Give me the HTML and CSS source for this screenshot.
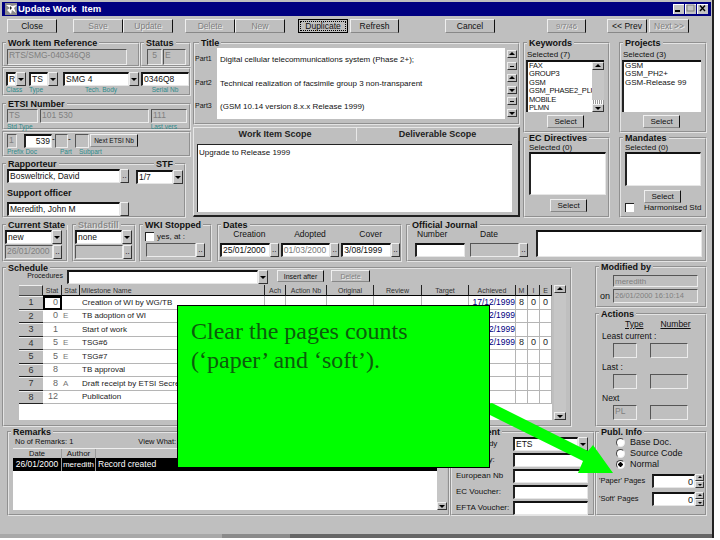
FILE: index.html
```html
<!DOCTYPE html>
<html lang="en">
<head>
<meta charset="utf-8">
<title>Update Work Item</title>
<link rel="stylesheet" href="styles.css">
</head>
<body>
<div class="window">
  <header class="titlebar">
    <svg class="appicon" viewBox="0 0 12 12" width="12" height="12"><rect width="12" height="12" fill="#8c8c8c"/><path d="M1 2l4 3-3 2 4 4 1-4 4 3-2-5 3-3-5 1-2-1z" fill="#fff"/><path d="M5 3l2 2-2 2z" fill="#222"/></svg>
    <span class="titletext">Update Work&nbsp; Item</span>
    <span class="winbtns">
      <span class="winbtn"><svg viewBox="0 0 11 9" width="11" height="9"><rect x="2" y="6" width="5" height="2" fill="#000"/></svg></span>
      <span class="winbtn"><svg viewBox="0 0 11 9" width="11" height="9"><rect x="2" y="1" width="7" height="6" fill="none" stroke="#808080"/></svg></span>
      <span class="winbtn"><svg viewBox="0 0 11 9" width="11" height="9"><path d="M3 1.5l5 5.5M8 1.5l-5 5.5" stroke="#000" stroke-width="1.4"/></svg></span>
    </span>
  </header>

  <nav class="toolbar">
    <button class="btn">Close</button>
    <span class="tgroup g1"><button class="btn off">Save</button><button class="btn off">Update</button></span>
    <span class="tgroup g2"><button class="btn off">Delete</button><button class="btn off">New</button></span>
    <span class="tgroup g3"><button class="btn focus"><span>Duplicate</span></button><button class="btn refresh">Refresh</button></span>
    <span class="tgroup g4"><button class="btn">Cancel</button></span>
    <span class="tgroup g5"><button class="btn off date">9/7/46</button></span>
    <span class="tgroup g6"><button class="btn nav">&lt;&lt; Prev</button><button class="btn nav off">Next &gt;&gt;</button></span>
  </nav>

  <section class="row-a">
    <div class="col-left">
      <div class="pair">
        <fieldset class="fs ref"><legend>Work Item Reference</legend>
          <div class="in dis ref-in">RTS/SMG-040346Q8</div>
        </fieldset>
        <fieldset class="fs status"><legend>Status</legend>
          <div class="status-row"><div class="in dis st1">5</div><div class="in dis st2">E</div></div>
        </fieldset>
      </div>
      <div class="box classrow">
        <div class="ctl cl-r"><div class="combo"><span class="in val">R</span><i class="dd"></i></div><small>Class</small></div>
        <div class="ctl cl-t"><div class="combo"><span class="in val">TS</span><i class="dd"></i></div><small>Type</small></div>
        <div class="ctl cl-b"><div class="combo"><span class="in val">SMG 4</span><i class="dd"></i></div><small class="mid">Tech. Body</small></div>
        <div class="ctl cl-s"><div class="in">0346Q8</div><small class="mid">Serial Nb</small></div>
      </div>
      <fieldset class="fs etsi"><legend>ETSI Number</legend>
        <div class="etsi-row">
          <div class="in dis e1">TS</div><div class="in dis e2">101 530</div><div class="in dis e3">111</div>
        </div>
        <div class="etsi-labels"><small>Std Type</small><small>Last vers</small></div>
      </fieldset>
      <div class="box docrow">
        <div class="doc-fields">
          <div class="in dis d1">1</div><div class="in d2">539</div><span class="dash">-</span><div class="in dis d3"></div><span class="dash">-</span><div class="in dis d4"></div><button class="btn tiny">Next ETSI Nb</button>
        </div>
        <div class="doc-labels"><small>Prefix Doc</small><small>Part</small><small>Subpart</small></div>
      </div>
      <div class="rap">
        <fieldset class="fs rap1"><legend>Rapporteur</legend>
          <div class="picker"><div class="in val">Bosweltrick, David</div><button class="mini">..</button></div>
          <div class="subhead">Support officer</div>
          <div class="picker"><div class="in val">Meredith, John M</div><button class="mini"></button></div>
        </fieldset>
        <fieldset class="fs rap2"><legend>STF</legend>
          <div class="combo stf"><span class="in val">1/7</span><i class="dd"></i></div>
        </fieldset>
      </div>
    </div>

    <div class="col-mid">
      <fieldset class="fs title"><legend>Title</legend>
        <div class="title-grid">
          <label>Part1</label><div class="tline">Digital cellular telecommunications system (Phase 2+);</div><div class="spin"><i class="sb up"></i><i class="sb flat"></i></div>
          <label>Part2</label><div class="tline">Technical realization of facsimile group 3 non-transparent</div><div class="spin"><i class="sb up"></i><i class="sb down"></i></div>
          <label>Part3</label><div class="tline">(GSM 10.14 version 8.x.x Release 1999)</div><div class="spin"><i class="sb flat"></i><i class="sb down"></i></div>
        </div>
      </fieldset>
      <div class="tabs">
        <div class="tabhead"><span class="tab">Work Item Scope</span><span class="tab">Deliverable Scope</span></div>
        <div class="tabbody"><div class="scope">Upgrade to Release 1999</div></div>
      </div>
    </div>

    <div class="col-right">
      <fieldset class="fs kw"><legend>Keywords</legend>
        <div class="sel-label">Selected (7)</div>
        <div class="list">
          <div class="items"><span>FAX</span><span>GROUP3</span><span>GSM</span><span>GSM_PHASE2_PLU</span><span>MOBILE</span><span>PLMN</span></div>
          <div class="vscroll"><i class="sb up"></i><i class="track"></i><i class="thumb"></i><i class="sb down"></i></div>
        </div>
        <button class="btn sel kw-sel">Select</button>
      </fieldset>
      <fieldset class="fs pj"><legend>Projects</legend>
        <div class="sel-label">Selected (3)</div>
        <div class="list pj-list"><div class="items"><span>GSM</span><span>GSM_PH2+</span><span>GSM-Release 99</span></div></div>
        <button class="btn sel pj-sel">Select</button>
      </fieldset>
      <fieldset class="fs ec"><legend>EC Directives</legend>
        <div class="sel-label tight">Selected (0)</div>
        <div class="in ec-box"></div>
        <button class="btn sel ec-sel">Select</button>
      </fieldset>
      <fieldset class="fs md"><legend>Mandates</legend>
        <div class="sel-label tight">Selected (0)</div>
        <div class="in md-box"></div>
        <button class="btn sel md-sel">Select</button>
        <div class="harm"><i class="check"></i><span>Harmonised Std</span></div>
      </fieldset>
    </div>
  </section>

  <section class="row-b">
    <fieldset class="fs cs"><legend>Current State</legend>
      <div class="combo"><span class="in val">new</span><i class="dd"></i></div>
      <div class="picker date2"><div class="in dis val">26/01/2000</div><button class="mini">..</button></div>
    </fieldset>
    <fieldset class="fs ss"><legend class="gray">Standstill</legend>
      <div class="combo"><span class="in val">none</span><i class="dd"></i></div>
      <div class="picker date2"><div class="in dis val"></div><button class="mini">..</button></div>
    </fieldset>
    <fieldset class="fs wk"><legend>WKI Stopped</legend>
      <div class="yes"><i class="check"></i><span>yes, at :</span></div>
      <div class="picker wk-p"><div class="in dis val"></div><button class="mini">..</button></div>
    </fieldset>
    <fieldset class="fs dt"><legend>Dates</legend>
      <div class="dates">
        <div class="dcol"><span>Creation</span><div class="picker"><div class="in val">25/01/2000</div><button class="mini">..</button></div></div>
        <div class="dcol"><span>Adopted</span><div class="picker"><div class="in val faded">01/03/2000</div><button class="mini">..</button></div></div>
        <div class="dcol"><span>Cover</span><div class="picker"><div class="in val">3/08/1999</div><button class="mini">..</button></div></div>
      </div>
    </fieldset>
    <fieldset class="fs oj"><legend>Official Journal</legend>
      <div class="oj-row">
        <div class="ojcol oj-num"><span>Number</span><div class="in"></div></div>
        <div class="ojcol oj-date"><span>Date</span><div class="picker"><div class="in dis val"></div><button class="mini">..</button></div></div>
        <div class="in oj-text"></div>
      </div>
    </fieldset>
  </section>

  <section class="row-c">
    <fieldset class="fs sched"><legend>Schedule</legend>
      <div class="sched-top">
        <span class="proc">Procedures</span>
        <div class="combo proc-c"><span class="in val"></span><i class="dd"></i></div>
        <button class="btn ins">Insert after</button>
        <button class="btn off del">Delete</button>
      </div>
      <div class="sched-main">
        <div class="gridwrap">
          <table class="grid">
            <colgroup><col class="c1"><col class="c2"><col class="c3"><col class="c4"><col class="c5"><col class="c6"><col class="c7"><col class="c8"><col class="c9"><col class="c10"><col class="c11"><col class="c12"><col class="c13"></colgroup>
            <thead><tr><th></th><th>Stat</th><th>Stat</th><th class="l">Milestone Name</th><th>Ach</th><th>Action Nb</th><th>Original</th><th>Review</th><th>Target</th><th>Achieved</th><th>M</th><th>I</th><th>E</th></tr></thead>
            <tbody>
              <tr><th>1</th><td class="cur">0</td><td></td><td class="l">Creation of WI by WG/TB</td><td></td><td></td><td></td><td></td><td></td><td class="ach">17/12/1999</td><td>8</td><td>0</td><td>0</td></tr>
              <tr><th>2</th><td class="n">0</td><td class="g">E</td><td class="l">TB adoption of WI</td><td></td><td></td><td></td><td></td><td></td><td class="ach">17/12/1999</td><td></td><td></td><td></td></tr>
              <tr><th>3</th><td class="n">1</td><td></td><td class="l">Start of work</td><td></td><td></td><td></td><td></td><td></td><td class="ach">17/12/1999</td><td></td><td></td><td></td></tr>
              <tr><th>4</th><td class="n">5</td><td class="g">E</td><td class="l">TSG#6</td><td></td><td></td><td></td><td></td><td></td><td class="ach">17/12/1999</td><td>8</td><td>0</td><td>0</td></tr>
              <tr><th>5</th><td class="n">5</td><td class="g">E</td><td class="l">TSG#7</td><td></td><td></td><td></td><td></td><td></td><td></td><td></td><td></td><td></td></tr>
              <tr><th>6</th><td class="n">8</td><td></td><td class="l">TB approval</td><td></td><td></td><td></td><td></td><td></td><td></td><td></td><td></td><td></td></tr>
              <tr><th>7</th><td class="n">8</td><td class="g">A</td><td class="l">Draft receipt by ETSI Secretariat</td><td></td><td></td><td></td><td></td><td></td><td></td><td></td><td></td><td></td></tr>
              <tr><th>8</th><td class="n">12</td><td></td><td class="l">Publication</td><td></td><td></td><td></td><td></td><td></td><td></td><td></td><td></td><td></td></tr>
            </tbody>
          </table>
        </div>
        <div class="vscroll tall"><i class="sb up"></i><i class="track"></i><i class="sb down"></i></div>
      </div>
    </fieldset>
    <div class="col-mod">
      <fieldset class="fs mod"><legend>Modified by</legend>
        <div class="in dis mod1">meredith</div>
        <div class="mod-on"><span>on</span><div class="in dis mod2">26/01/2000 16:10:14</div></div>
      </fieldset>
      <fieldset class="fs act"><legend>Actions</legend>
        <div class="act-head"><u>Type</u><u>Number</u></div>
        <div class="act-l">Least current :</div>
        <div class="act-f"><div class="in dis a1"></div><div class="in dis a2"></div></div>
        <div class="act-l">Last :</div>
        <div class="act-f"><div class="in dis a1"></div><div class="in dis a2"></div></div>
        <div class="act-l">Next</div>
        <div class="act-f"><div class="in dis a1">PL</div><div class="in dis a2"></div></div>
      </fieldset>
    </div>
  </section>

  <section class="row-d">
    <fieldset class="fs rem"><legend>Remarks</legend>
      <div class="rem-info"><span>No of Remarks: 1</span><span class="view">View What:</span></div>
      <div class="rem-main">
        <div class="rem-grid">
          <div class="rem-head"><span class="r1">Date</span><span class="r2">Author</span><span class="r3"></span></div>
          <div class="rem-row"><span class="r1">26/01/2000</span><span class="r2">meredith</span><span class="r3">Record created</span></div>
        </div>
        <div class="vscroll rem-sb"><i class="track"></i><i class="sb down"></i></div>
      </div>
    </fieldset>
    <fieldset class="fs doc"><legend>Document</legend>
      <div class="doc-line"><span>Resp. Body</span><div class="combo"><span class="in val">ETS</span><i class="dd"></i></div></div>
      <div class="doc-line"><span>Sec. Body:</span><div class="in"></div></div>
      <div class="doc-line"><span>European Nb</span><div class="in"></div></div>
      <div class="doc-line"><span>EC Voucher:</span><div class="in"></div></div>
      <div class="doc-line"><span>EFTA Voucher:</span><div class="in"></div></div>
    </fieldset>
    <fieldset class="fs pub"><legend>Publ. Info</legend>
      <div class="radio"><i class="dot"></i><span>Base Doc.</span></div>
      <div class="radio"><i class="dot"></i><span>Source Code</span></div>
      <div class="radio"><i class="dot on"></i><span>Normal</span></div>
      <div class="pages first"><span>'Paper' Pages</span><div class="in num">0</div><div class="updn"><i class="sb up"></i><i class="sb down"></i></div></div>
      <div class="pages"><span>'Soft' Pages</span><div class="in num">0</div><div class="updn"><i class="sb up"></i><i class="sb down"></i></div></div>
    </fieldset>
  </section>

  <footer class="strip"><span class="s1"></span><span class="s2"></span><span class="s3"></span></footer>

  <svg class="arrow" viewBox="0 0 720 540" width="720" height="540"><path d="M486 404L492 403L588 451L593 445L613 473L578 473L583 461L486 413Z" fill="#00ff00"/></svg>
  <aside class="callout">Clear the pages counts<br>(&lsquo;paper&rsquo; and &lsquo;soft&rsquo;).</aside>
</div>
</body>
</html>
```

FILE: styles.css
```css
* { box-sizing: border-box; }
html, body { margin: 0; padding: 0; background: #fff; }
body { font: 8.5px/11px "Liberation Sans", Arial, sans-serif; color: #111; }
i { display: block; font-style: normal; }
small { display: block; font-size: 6.5px; line-height: 8px; color: #2e8b8b; white-space: nowrap; }
.window { position: relative; width: 714px; height: 538px; background: #bfbfbf; border-right: 2px solid #222; display: flex; flex-direction: column; overflow: hidden; padding-left: 2px; }

.titlebar { height: 14px; margin-top: 2px; width: 709px; background: #000080; display: flex; align-items: center; color: #fff; font: bold 9.5px/14px "Liberation Sans", sans-serif; padding-left: 3px; flex: none; }
.appicon { margin-right: 1px; }
.winbtns { margin-left: auto; margin-right: 3px; display: flex; gap: 1px; }
.winbtn { width: 11px; height: 10px; background: #c4c4c4; border-top: 1px solid #fff; border-left: 1px solid #fff; display: block; line-height: 0; }
.winbtn svg { display: block; margin: -1px 0 0 -1px; }

.btn { font: 8.5px/11px "Liberation Sans", sans-serif; color: #111; background: #bfbfbf; border: 1px solid; border-color: #efefef #111 #888 #efefef; padding: 0; margin: 0; display: block; }
.btn.off { color: #7f7f7f; text-shadow: 1px 1px 0 #eee; }
.toolbar { display: flex; height: 14px; margin-top: 3px; padding-left: 5px; flex: none; }
.toolbar .btn { width: 50px; height: 14px; }
.tgroup { display: flex; }
.g1 { margin-left: 16px; }
.g2 { margin-left: 12px; }
.g3 { margin-left: 13px; }
.g4 { margin-left: 46px; }
.g5 { margin-left: 52px; }
.g6 { margin-left: 21px; }
.toolbar .refresh { width: 49px; margin-left: 2px; }
.toolbar .date { width: 39px; font-size: 7.5px; }
.toolbar .nav { width: 40px; margin-right: 2px; }
.btn.focus { border: 1px solid #000; padding: 1px; }
.btn.focus span { display: block; border: 1px dotted #000; line-height: 8px; height: 10px; }

.fs { --pad: 0px; margin: 0; padding: 0 0 0 var(--pad); min-width: 0; border: 2px groove #e4e4e4; }
legend { font: bold 9px/10px "Liberation Sans", sans-serif; height: 10px; padding: 0 2px; margin-left: calc(2px - var(--pad)); white-space: nowrap; }
legend.gray { color: #8a8a8a; text-shadow: 1px 1px 0 #e8e8e8; }
.box { border: 2px groove #e4e4e4; }

.in { display: block; background: #fff; border-top: 2px solid #111; border-left: 2px solid #222; border-right: 1px solid #e6e6e6; border-bottom: 1px solid #e6e6e6; font-size: 8.5px; line-height: 10px; padding: 0 1px; white-space: nowrap; overflow: hidden; height: 14px; }
.in.dis { background: #bfbfbf; color: #808080; border-top: 1px solid #555; border-left: 1px solid #555; border-right: 1px solid #ececec; border-bottom: 1px solid #ececec; line-height: 11px; }
.faded { color: #777; }
.combo, .picker { display: flex; height: 14px; }
.combo .val, .picker .val { flex: 1; min-width: 0; height: 100%; }
.dd { width: 10px; flex: none; background: #bfbfbf; border: 1px solid; border-color: #eee #333 #333 #eee; position: relative; }
.dd::after, .sb.down::after { content: ""; position: absolute; left: 50%; top: 50%; margin: -1px 0 0 -3px; border: 3px solid transparent; border-top: 3px solid #000; border-bottom: 0; }
.mini { width: 9px; flex: none; background: #bfbfbf; border: 1px solid; border-color: #eee #333 #333 #eee; padding: 0; font: 8px/8px "Liberation Sans", sans-serif; margin: 0; }

.row-a { display: flex; margin-top: 5px; height: 180px; flex: none; }
.col-left { width: 189px; display: flex; flex-direction: column; }
.pair { display: flex; height: 29px; }
.ref { width: 138px; --pad: 3px; padding-top: 1px; }
.ref-in { width: 120px; height: 16px; }
.status { width: 51px; --pad: 5px; padding-top: 1px; }
.status-row { display: flex; gap: 1px; }
.st1 { width: 15px; height: 16px; text-align: center; }
.st2 { width: 23px; height: 16px; }
.classrow { height: 29px; display: flex; padding: 3px 0 0 2px; }
.ctl { flex: none; }
.cl-r { width: 20px; margin-right: 3px; }
.cl-t { width: 29px; margin-right: 5px; }
.cl-b { width: 76px; margin-right: 2px; }
.cl-s { width: 48px; }
.mid { text-align: center; }
.etsi { height: 31px; margin-top: 3px; --pad: 3px; }
.etsi-row { display: flex; gap: 2px; }
.e1 { width: 31px; }
.e2 { width: 109px; }
.e3 { width: 36px; }
.etsi-labels { display: flex; justify-content: space-between; padding-right: 12px; }
.docrow { height: 26px; margin-top: 1px; padding: 1px 0 0 3px; }
.doc-fields { display: flex; align-items: flex-start; }
.doc-fields .in { height: 14px; }
.d1 { width: 10px; }
.d2 { width: 28px; margin-left: 7px; text-align: right; }
.dash { width: 3px; text-align: center; }
.d3 { width: 13px; }
.d4 { width: 14px; margin-left: 4px; }
.tiny { width: 48px; height: 13px; font-size: 6.5px; line-height: 9px; margin-left: 1px; }
.doc-labels { display: flex; }
.doc-labels small:nth-child(1) { width: 53px; }
.doc-labels small:nth-child(2) { width: 19px; }
.rap { display: flex; height: 59px; margin-top: 2px; width: 184px; }
.rap1 { width: 131px; border-right: 0; --pad: 3px; }
.rap1 .picker { width: 122px; }
.rap1 .mini { width: 9px; }
.subhead { font: bold 9px/12px "Liberation Sans", sans-serif; margin: 4px 0 3px; }
.rap2 { width: 53px; border-left: 0; --pad: 3px; }
.rap2 legend { margin-left: 18px; }
.stf { width: 47px; margin-top: 1px; }

.col-mid { width: 327px; margin-left: 2px; display: flex; flex-direction: column; }
.title { height: 87px; }
.title legend { margin-left: 4px; }
.title-grid { display: grid; grid-template-columns: 22px 288px 12px; grid-auto-rows: 23.67px; }
.title-grid label { font-size: 7px; line-height: 22px; }
.tline { background: #fff; padding-left: 3px; line-height: 23px; font-size: 8px; white-space: nowrap; overflow: hidden; }
.spin { display: flex; flex-direction: column; gap: 4px; padding: 2px 0 0 2px; }
.sb { width: 10px; height: 8px; background: #bfbfbf; border: 1px solid; border-color: #eee #333 #333 #eee; position: relative; flex: none; }
.sb.up::after { content: ""; position: absolute; left: 50%; top: 50%; margin: -2px 0 0 -3px; border: 3px solid transparent; border-bottom: 3px solid #000; border-top: 0; }
.sb.down::after { margin: -1px 0 0 -3px; }
.sb.flat::after { content: ""; position: absolute; left: 2px; right: 2px; top: 3px; height: 1px; background: #000; }
.tabs { margin-top: 2px; height: 90px; display: flex; flex-direction: column; }
.tabhead { display: flex; height: 14px; flex: none; }
.tab { flex: none; text-align: center; font: bold 9px/13px "Liberation Sans", sans-serif; color: #222; border-top: 1px solid #e8e8e8; border-left: 1px solid #e8e8e8; }
.tab:first-child { width: 163px; }
.tab:last-child { width: 164px; border-right: 2px solid #333; }
.tabbody { flex: 1; border-left: 1px solid #e8e8e8; border-right: 2px solid #222; border-bottom: 2px solid #222; padding: 3px 0 0 3px; }
.scope { width: 315px; height: 68px; background: #fff; border-top: 1px solid #222; border-left: 1px solid #222; padding: 0 1px; font-size: 8px; line-height: 15px; }

.col-right { margin-left: 3px; width: 184px; display: grid; grid-template-columns: 87px 88px; column-gap: 9px; grid-template-rows: 95px 85px; }
.sel-label { font-size: 8px; line-height: 11px; margin: 1px 0 0 1px; }
.sel-label.tight { margin: 0 0 0 4px; line-height: 9px; }
.kw { --pad: 1px; }
.pj { --pad: 1px; }
.list { display: flex; height: 52px; background: #fff; border-top: 2px solid #111; border-left: 2px solid #222; overflow: hidden; }
.kw .list { width: 78px; }
.pj .list { width: 79px; }
.items { flex: 1; min-width: 0; font-size: 7.5px; letter-spacing: -.2px; line-height: 8.4px; padding-left: 1px; }
.pj .items { font-size: 8px; letter-spacing: 0; }
.items span { display: block; white-space: nowrap; }
.vscroll { display: flex; flex-direction: column; width: 12px; flex: none; }
.vscroll .sb { width: 100%; }
.vscroll .track { flex: 1; background: #c6c6c6; }
.vscroll .thumb { height: 4px; background: repeating-linear-gradient(90deg, #fff 0 1px, #999 1px 2px); }
.sel { width: 37px; height: 13px; font-size: 8px; margin-top: 3px; }
.kw-sel, .pj-sel { margin-left: 21px; }
.ec-box { width: 77px; height: 43px; margin-left: 4px; }
.ec-sel { margin: 4px 0 0 25px; }
.md-box { width: 76px; height: 34px; margin-left: 4px; }
.md-sel { margin: 4px 0 0 23px; }
.harm { display: flex; align-items: center; margin-left: 4px; height: 9px; font-size: 8px; }
.harm span { margin-left: 10px; white-space: nowrap; }
.check { width: 9px; height: 9px; background: #fff; border-top: 1px solid #222; border-left: 1px solid #222; flex: none; }

.row-b { display: flex; height: 42px; margin-top: 2px; flex: none; }
.cs { width: 66px; --pad: 1px; }
.cs .combo, .ss .combo { width: 57px; }
.date2 { width: 57px; margin-top: 1px; }
.ss { width: 64px; margin-left: 4px; --pad: 1px; }
.wk { width: 73px; margin-left: 3px; --pad: 4px; }
.yes { display: flex; align-items: center; height: 12px; gap: 3px; font-size: 8px; }
.wk-p { width: 59px; margin: 1px 0 0 1px; }
.dt { width: 185px; margin-left: 5px; --pad: 1px; }
.dates { display: flex; gap: 2px; }
.dcol { width: 59px; }
.dcol span { display: block; height: 13px; text-align: center; font-size: 8.5px; line-height: 9px; }
.dcol .in.val { font-size: 8.5px; }
.oj { width: 301px; margin-left: 4px; --pad: 7px; }
.oj-row { display: flex; align-items: flex-end; }
.ojcol span { display: block; height: 13px; font-size: 8.5px; line-height: 9px; padding-left: 2px; }
.oj-num { width: 50px; }
.oj-date { width: 58px; margin-left: 5px; }
.oj-date span { padding-left: 10px; }
.oj-text { width: 166px; height: 27px; margin-left: 8px; }

.row-c { display: flex; height: 165px; flex: none; margin-top: 0; }
.sched { width: 570px; height: 164px; margin-top: 1px; --pad: 15px; }
.sched-top { display: flex; align-items: flex-start; height: 15px; margin-top: -3px; }
.proc { width: 44px; text-align: right; font-size: 7px; line-height: 12px; white-space: nowrap; }
.proc-c { width: 201px; margin-left: 4px; }
.ins { width: 47px; height: 12px; font-size: 7px; line-height: 9px; margin-left: 9px; }
.del { width: 39px; height: 12px; font-size: 7px; line-height: 9px; margin-left: 7px; }
.sched-main { display: flex; gap: 2px; }
.gridwrap { width: 533px; height: 135px; background: #fff; overflow: hidden; }
.grid { table-layout: fixed; width: 533px; border-collapse: separate; border-spacing: 0; font-size: 8px; }
.c1 { width: 24px; } .c2 { width: 19px; } .c3 { width: 18px; } .c4 { width: 185px; } .c5 { width: 21px; } .c6 { width: 41px; }
.c7 { width: 47px; } .c8 { width: 48px; } .c9 { width: 47px; } .c10 { width: 47px; } .c11 { width: 12px; } .c12 { width: 12px; } .c13 { width: 12px; }
.grid thead th { height: 11px; background: #bfbfbf; font: 7px/9px "Liberation Sans", sans-serif; color: #333; padding: 0; border-right: 1px solid #222; border-bottom: 1px solid #000; overflow: hidden; white-space: nowrap; text-align: center; }
.grid thead th:first-child { background: #aaa; border-top: 1px solid #eee; border-bottom: 1px solid #444; }
.grid thead th.l { text-align: left; padding-left: 1px; }
.grid tbody tr { height: 13.5px; }
.grid tbody th { background: #bfbfbf; font: 9px/11px "Liberation Sans", sans-serif; color: #333; padding: 0; border-top: 1px solid #eee; border-bottom: 1px solid #222; }
.grid td { padding: 0; border-right: 1px solid #b5b5b5; border-bottom: 1px solid #b5b5b5; text-align: center; line-height: 11px; overflow: hidden; white-space: nowrap; color: #222; font-size: 9px; }
.grid td:nth-child(2), .grid td:nth-child(3) { border-right: 0; }
.grid td:nth-child(4) { border-right: 1px solid #b5b5b5; }
.grid td.l { text-align: left; padding-left: 2px; font-size: 8px; }
.grid td.n { text-align: right; padding-right: 4px; color: #666; }
.grid td.g { text-align: left; color: #777; padding-left: 1px; font-size: 8px; }
.grid td.cur { outline: 2px solid #000; outline-offset: -2px; text-align: right; padding-right: 4px; color: #666; }
.grid td.ach { color: #000080; text-align: right; font-size: 8.5px; }
.tall { height: 135px; }

.col-mod { margin-left: 23px; width: 112px; display: flex; flex-direction: column; gap: 1px; }
.mod { height: 46px; }
.mod1 { width: 85px; height: 12px; margin: 3px 0 0 16px; font-size: 8px; line-height: 10px; }
.mod-on { display: flex; margin-top: 2px; }
.mod-on span { width: 16px; padding-left: 3px; line-height: 14px; font-size: 9px; }
.mod2 { width: 85px; height: 14px; font-size: 7.5px; }
.act { height: 119px; --pad: 16px; }
.act-head { display: flex; font-size: 8.5px; height: 12px; padding-left: 12px; gap: 17px; }
.act-l { font-size: 8.5px; line-height: 11px; margin: 0 0 1px -11px; white-space: nowrap; height: 11px; }
.act-f { display: flex; gap: 13px; height: 15px; margin-bottom: 4px; }
.a1 { width: 24px; height: 15px; }
.a2 { width: 38px; height: 15px; }

.row-d { display: flex; height: 89px; flex: none; padding-left: 5px; }
.rem { width: 443px; --pad: 4px; }
.rem-info { display: flex; height: 11px; font-size: 7.5px; line-height: 10px; padding-left: 2px; }
.view { margin-left: 65px; }
.rem-main { display: flex; height: 62px; width: 434px; }
.rem-grid { width: 424px; background: #fff; }
.rem-head { display: flex; height: 10px; background: #bfbfbf; border-top: 1px solid #eee; font-size: 7.5px; line-height: 9px; }
.rem-row { display: flex; height: 13px; background: #000; color: #fff; line-height: 13px; font-size: 8.5px; }
.r1 { width: 49px; border-right: 1px solid #999; text-align: center; overflow: hidden; white-space: nowrap; }
.r2 { width: 34px; border-right: 1px solid #999; text-align: center; overflow: hidden; white-space: nowrap; font-size: 8px; }
.r3 { padding-left: 2px; white-space: nowrap; }
.rem-sb { width: 10px; }
.doc { width: 145px; --pad: 4px; }
.doc-line { display: flex; height: 14px; margin-bottom: 2px; font-size: 8px; line-height: 13px; }
.doc-line span { width: 57px; white-space: nowrap; flex: none; }
.doc-line .in, .doc-line .combo { width: 75px; }
.pub { width: 112px; --pad: 2px; }
.radio { display: flex; align-items: center; height: 11px; padding-left: 17px; gap: 5px; font-size: 9px; white-space: nowrap; }
.dot { width: 9px; height: 9px; border-radius: 50%; background: #fff; border: 1px solid #444; border-right-color: #eee; border-bottom-color: #eee; flex: none; }
.dot.on { background: radial-gradient(circle, #000 0 2px, #fff 2.4px); }
.pages { display: flex; height: 14px; font-size: 7.5px; line-height: 14px; margin-top: 4px; white-space: nowrap; }
.pages span { width: 53px; flex: none; }
.pages .num { width: 43px; text-align: right; line-height: 12px; font-size: 9px; }
.updn { display: flex; flex-direction: column; width: 9px; }
.updn .sb { width: 9px; height: 7px; }
.updn .sb.up::after { margin: -2px 0 0 -2px; border-width: 2px; border-bottom-color: #000; border-top: 0; }
.updn .sb.down::after { margin: -1px 0 0 -2px; border-width: 2px; border-top-color: #000; border-bottom: 0; }

.strip { display: flex; height: 4px; margin: auto 0 0 -2px; flex: none; background: #666; }
.s1 { width: 222px; background: #a8a8a8; }
.s2 { width: 68px; background: #8a8a8a; }
.s3 { flex: 1; }

.arrow { position: absolute; left: 0; top: 0; pointer-events: none; }
.callout { position: absolute; left: 177px; top: 305px; width: 313px; height: 163px; background: #00ff00; border: 1px solid #000; padding: 11px 13px; font: 24px/29px "Liberation Serif", serif; color: #0c5c0c; }
```
